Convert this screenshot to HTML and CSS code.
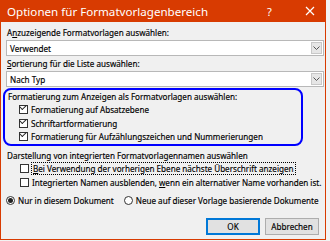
FILE: index.html
```html
<!DOCTYPE html>
<html lang="de">
<head>
  <meta charset="UTF-8" />
  <title>Optionen für Formatvorlagenbereich</title>
  <link rel="stylesheet" href="styles.css">
</head>
<body>
  <div class="dialog">
    <div class="titlebar">
      <span class="title">Optionen für Formatvorlagenbereich</span>
      <span class="help">?</span>
      <svg class="close" width="10" height="10" viewBox="0 0 10 10">
        <path d="M1 1 L9 9 M9 1 L1 9" stroke="#fff" stroke-width="1.2" fill="none"/>
      </svg>
    </div>

    <div class="content">
      <div class="label">A<u>n</u>zuzeigende Formatvorlagen auswählen:</div>
      <div class="select">
        <span>Verwendet</span>
        <span class="drop">
          <svg width="7" height="4" viewBox="0 0 7 4"><path d="M0.5 0.5 L3.5 3.5 L6.5 0.5" stroke="#555" fill="none"/></svg>
        </span>
      </div>

      <div class="label"><u>S</u>ortierung für die Liste auswählen:</div>
      <div class="select">
        <span>Nach Typ</span>
        <span class="drop">
          <svg width="7" height="4" viewBox="0 0 7 4"><path d="M0.5 0.5 L3.5 3.5 L6.5 0.5" stroke="#555" fill="none"/></svg>
        </span>
      </div>

      <div class="highlight">
        <div class="label">Formatierung zum Anzeigen als Formatvorlagen auswählen:</div>
        <div class="check-list tight">
          <div class="check-row"><span class="box checked"></span><span>Formatierung auf Absatzebene</span></div>
          <div class="check-row"><span class="box checked"></span><span>Schriftartformatierung</span></div>
          <div class="check-row"><span class="box checked"></span><span>Formatierung für Aufzählungszeichen und Nummerierungen</span></div>
        </div>
      </div>

      <div class="label section">Darstellung von integrierten Formatvorlagennamen auswählen</div>
      <div class="check-list">
        <div class="check-row"><span class="box"></span><span class="focus"><u>B</u>ei Verwendung der vorherigen Ebene nächste Überschrift anzeigen</span></div>
        <div class="check-row"><span class="box"></span><span>Integrierten Namen ausblenden, <u>w</u>enn ein alternativer Name vorhanden ist.</span></div>
      </div>

      <div class="radios">
        <div class="radio-row"><span class="radio on"></span><span>Nur in diesem Dokument</span></div>
        <div class="radio-row"><span class="radio"></span><span>Neue auf dieser Vorlage basierende Dokumente</span></div>
      </div>

      <div class="buttons">
        <button class="btn default">OK</button>
        <button class="btn">Abbrechen</button>
      </div>
    </div>
  </div>
</body>
</html>
```

FILE: styles.css
```css
body {
  margin: 0;
  background: #f3f3f3;
  font-family: 'Noto Sans', sans-serif;
  font-size: 8.1px;
  color: #000;
  white-space: nowrap;
  -webkit-text-stroke: 0.15px #000;
}
u {
  text-decoration: underline;
  text-underline-offset: 1px;
}
.dialog {
  width: 324px;
  height: 239px;
  border: 1px solid #d83b01;
  border-top: none;
  background: #f0f0f0;
  display: flex;
  flex-direction: column;
}
.titlebar {
  height: 22px;
  flex: none;
  background: #d83b01;
  color: #fff;
  -webkit-text-stroke: 0;
  display: flex;
  align-items: center;
  padding: 0 0 0 6px;
}
.title {
  font-size: 11.6px;
  flex: 1;
}
.help {
  font-size: 11px;
  width: 12px;
  margin-right: 26px;
}
.close {
  margin-right: 10px;
}
.content {
  padding: 5px 1px 0 5px;
  display: flex;
  flex-direction: column;
}
.label {
  height: 12px;
  line-height: 12px;
  margin-left: 1px;
  flex: none;
}
.select {
  height: 16px;
  box-sizing: border-box;
  flex: none;
  margin: 1px 0 2px 0;
  border: 1px solid #b8b8b8;
  background: #fff;
  display: flex;
  align-items: center;
  justify-content: space-between;
  padding-left: 3px;
}
.drop {
  width: 11px;
  height: 12px;
  margin-right: 1px;
  background: #e6e6e6;
  border: 1px solid #c8c8c8;
  box-sizing: border-box;
  display: flex;
  align-items: center;
  justify-content: center;
}
.highlight {
  width: 294px;
  flex: none;
  margin: -1px 0 0 -3px;
  padding: 1px 0 0 2px;
  border: 2px solid #0000ff;
  border-radius: 8px;
}
.check-list {
  display: flex;
  flex-direction: column;
  padding-left: 14px;
}
.check-row {
  display: flex;
  align-items: center;
  height: 14px;
}
.tight {
  padding-left: 12px;
}
.tight .check-row {
  height: 13.5px;
}
.box {
  width: 9px;
  height: 9px;
  border: 1px solid #333;
  background: #fff;
  box-sizing: border-box;
  margin-right: 3px;
  position: relative;
  flex: none;
}
.box.checked::after {
  content: "";
  position: absolute;
  width: 5px;
  height: 3px;
  border-left: 1px solid #222;
  border-bottom: 1px solid #222;
  transform: rotate(-45deg);
  transform-origin: 2px 3px;
  top: -1px;
  left: 1px;
}
.section {
  margin-top: 4px;
}
.focus {
  outline: 1px dotted #000;
  outline-offset: 0;
  padding: 0 1px;
}
.radios {
  display: flex;
  margin-top: 5px;
  gap: 10px;
  height: 12px;
  flex: none;
}
.radio-row {
  display: flex;
  align-items: center;
}
.radio {
  width: 9px;
  height: 9px;
  border: 1px solid #333;
  border-radius: 50%;
  background: #fff;
  box-sizing: border-box;
  margin-right: 3px;
  display: flex;
  align-items: center;
  justify-content: center;
}
.radio.on::after {
  content: "";
  width: 5px;
  height: 5px;
  border-radius: 50%;
  background: #222;
}
.buttons {
  display: flex;
  justify-content: flex-end;
  gap: 5px;
  margin-top: 11px;
  padding-right: 5px;
}
.btn {
  width: 54px;
  height: 17px;
  font-family: 'Noto Sans', sans-serif;
  font-size: 8.1px;
  -webkit-text-stroke: 0.15px #000;
  color: #000;
  background: #e1e1e1;
  border: 1px solid #adadad;
  padding: 0;
}
.btn.default {
  border: 1px solid #0078d7;
  box-shadow: inset 0 0 0 1px #0078d7;
}
```
